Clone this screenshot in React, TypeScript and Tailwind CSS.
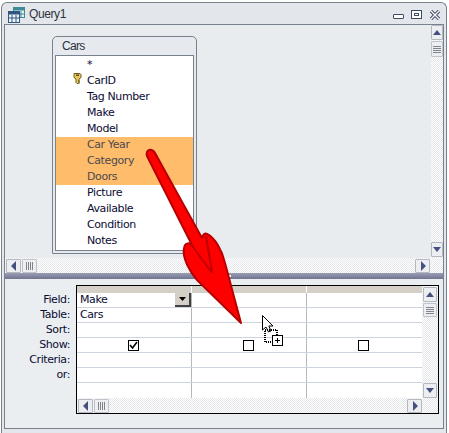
import React from 'react';

const dither = 'bg-[repeating-conic-gradient(#e4e6ea_0_25%,#ffffff_0_50%)] bg-[length:2px_2px]';

const fields = ['*', 'CarID', 'Tag Number', 'Make', 'Model', 'Car Year', 'Category', 'Doors', 'Picture', 'Available', 'Condition', 'Notes'];
const selected = ['Car Year', 'Category', 'Doors'];
const rowLabels = ['Field:', 'Table:', 'Sort:', 'Show:', 'Criteria:', 'or:'];

const Arrow = ({ dir }: { dir: 'up' | 'down' | 'left' | 'right' }) => {
  const points = {
    up: '1,7 9,7 5,2',
    down: '1,2 9,2 5,7',
    left: '7,0 7,10 2,5',
    right: '3,0 3,10 8,5',
  }[dir];
  return (
    <svg width="10" height="10" viewBox="0 0 10 10">
      <polygon points={points} fill="#46507c" />
    </svg>
  );
};

const ScrollBtn = ({ dir, className }: { dir: 'up' | 'down' | 'left' | 'right'; className: string }) => (
  <div className={`flex shrink-0 items-center justify-center rounded-[1px] border border-[#b4b8bf] bg-[#eceef1] ${className}`}>
    <Arrow dir={dir} />
  </div>
);

const VThumb = ({ className }: { className: string }) => (
  <div className={`flex shrink-0 flex-col items-center justify-center gap-[1px] rounded-[1px] border border-[#c0c4ca] bg-[#eceef1] ${className}`}>
    <div className="h-px w-[8px] bg-[#80848c]" />
    <div className="h-px w-[8px] bg-[#80848c]" />
    <div className="h-px w-[8px] bg-[#80848c]" />
    <div className="h-px w-[8px] bg-[#80848c]" />
  </div>
);

const HThumb = ({ className }: { className: string }) => (
  <div className={`flex shrink-0 flex-row items-center justify-center gap-[1px] rounded-[1px] border border-[#c0c4ca] bg-[#eceef1] ${className}`}>
    <div className="h-[8px] w-px bg-[#80848c]" />
    <div className="h-[8px] w-px bg-[#80848c]" />
    <div className="h-[8px] w-px bg-[#80848c]" />
    <div className="h-[8px] w-px bg-[#80848c]" />
  </div>
);

const Checkbox = ({ checked }: { checked?: boolean }) => (
  <div className="mr-[2px] flex h-[11px] w-[11px] items-center justify-center border border-black bg-white">
    {checked && (
      <svg width="9" height="9" viewBox="0 0 9 9">
        <path d="M1 4 L3.5 7 L8 1" fill="none" stroke="#000" strokeWidth="1.6" />
      </svg>
    )}
  </div>
);

const QueryIcon = () => (
  <svg width="17" height="16" viewBox="0 0 17 16">
    <rect x="5.5" y="0.5" width="11" height="10" fill="#e8f2f4" stroke="#3f8a96" />
    <rect x="5.5" y="0.5" width="11" height="3" fill="#3f8a96" />
    <path d="M9 4v6M13 4v6M6 7h10" stroke="#3f8a96" />
    <rect x="0.5" y="4.5" width="11" height="11" fill="#eef3f9" stroke="#2f5580" />
    <rect x="0.5" y="4.5" width="11" height="3" fill="#2f5580" />
    <path d="M4 8v7M8 8v7M1 11h10" stroke="#2f5580" />
  </svg>
);

const KeyIcon = () => (
  <svg width="9" height="14" viewBox="0 0 9 14">
    <path d="M1 1.5h6l1 1v3l-2 1.5v3.5l-1 1h-1l-1-1v-3.5l-2-1.5v-3z" fill="#e8c85a" stroke="#6f5a18" />
    <rect x="3" y="2.5" width="3" height="1.5" fill="#5a4a14" />
    <path d="M5 9h2M5 11h2" stroke="#6f5a18" />
  </svg>
);

export default function App() {
  return (
    <div className="relative h-[433px] w-[449px] overflow-hidden bg-white pl-[1px] pr-[2px] pt-[2px] font-['DejaVu_Sans',sans-serif] text-[11px] tracking-[-0.4px] text-[#0b0b33]">
      <div className="flex h-full flex-col rounded-t-[6px] border border-b-0 border-[#78828c] bg-[#e3e6ea] px-[2px] pb-[4px]">
        {/* title bar */}
        <div className="flex h-[21px] shrink-0 items-center">
          <div className="ml-[4px] mt-[3px]"><QueryIcon /></div>
          <span className="ml-[4px] mt-[1px] font-['Liberation_Sans',sans-serif] text-[12px] tracking-[-0.4px] text-[#2c3440]">Query1</span>
          <div className="ml-auto mr-[3px] flex items-center gap-[7px] pt-[2px]">
            <div className="mt-[4px] h-[5px] w-[11px] rounded-[1px] border border-[#3d4a66] bg-white" />
            <div className="flex h-[9px] w-[11px] items-center justify-center border border-[#3d4a66] bg-white">
              <div className="h-[3px] w-[5px] border border-[#3d4a66]" />
            </div>
            <svg width="12" height="10" viewBox="0 0 12 10">
              <path d="M2 1 L10 9 M10 1 L2 9" stroke="#3d4a66" strokeWidth="3.2" />
              <path d="M2 1 L10 9 M10 1 L2 9" stroke="#ffffff" strokeWidth="1.2" />
            </svg>
          </div>
        </div>

        {/* query window */}
        <div className="flex min-h-0 flex-1 flex-col border border-[#78828c] bg-[#e9ecef]">
          {/* design surface */}
          <div className="flex h-[248px] shrink-0 flex-col">
            <div className="flex min-h-0 flex-1">
              <div className="flex-1 pl-[47px] pt-[11px]">
                <div className="flex h-[218px] w-[145px] flex-col rounded-t-[5px] border border-[#78828c] bg-[#e6e9ed] px-[2px] pb-[2px]">
                  <div className="flex h-[18px] shrink-0 items-center pl-[7px] font-['Liberation_Sans',sans-serif] text-[12px] tracking-[-0.7px] text-[#2c3440]">Cars</div>
                  <div className="relative flex-1 border border-[#78828c] bg-white pt-[1px]">
                    {fields.map((f) => (
                      <div
                        key={f}
                        className={`flex h-[16px] items-center pl-[31px] ${selected.includes(f) ? 'bg-[#ffbc6b] text-[#4a4a50]' : ''}`}
                      >
                        {f}
                      </div>
                    ))}
                    <div className="absolute left-[17px] top-[16px]"><KeyIcon /></div>
                  </div>
                </div>
              </div>
              <div className={`flex w-[12px] shrink-0 flex-col ${dither}`}>
                <ScrollBtn dir="up" className="h-[15px]" />
                <VThumb className="mt-px h-[16px]" />
                <div className="flex-1" />
                <ScrollBtn dir="down" className="mb-px h-[15px]" />
              </div>
            </div>
            <div className={`flex h-[15px] shrink-0 items-center pl-[1px] pr-[13px] ${dither}`}>
              <ScrollBtn dir="left" className="h-[14px] w-[15px]" />
              <HThumb className="ml-px h-[14px] w-[15px]" />
              <div className="flex-1" />
              <ScrollBtn dir="right" className="h-[14px] w-[15px]" />
            </div>
          </div>

          {/* splitter */}
          <div className="relative flex h-[6px] shrink-0 items-center justify-center bg-gradient-to-b from-[#9a9db4] to-[#70748f]">
            <div className="ml-[4px] flex gap-[2px]">
              <div className="h-[2px] w-[2px] bg-white" />
              <div className="h-[2px] w-[2px] bg-white" />
              <div className="h-[2px] w-[2px] bg-white" />
            </div>
          </div>

          {/* design grid */}
          <div className="flex min-h-0 flex-1 bg-[#ebeef1]">
            <div className="w-[71px] shrink-0 pr-[6px] pt-[14px] text-right">
              {rowLabels.map((l) => (
                <div key={l} className="flex h-[15px] items-center justify-end">{l}</div>
              ))}
            </div>
            <div className="mt-[6px] flex h-[129px] w-[363px] shrink-0 border border-black bg-white">
              <div className="flex w-[345px] shrink-0 flex-col">
                <div className="flex h-[7px] shrink-0">
                  <div className="w-[115px] border-r border-[#ffffff] bg-[#d4d0c8]" />
                  <div className="w-[115px] border-r border-[#ffffff] bg-[#d4d0c8]" />
                  <div className="w-[115px] bg-[#d4d0c8]" />
                </div>
                {[0, 1, 2, 3, 4, 5, 6].map((r) => (
                  <div key={r} className={`flex h-[15px] shrink-0 ${r < 6 ? 'border-b border-[#cdd4e0]' : ''}`}>
                    {[0, 1, 2].map((c) => (
                      <div
                        key={c}
                        className={`flex w-[115px] items-center justify-center ${c < 2 ? 'border-r border-[#b4b8bc]' : ''}`}
                      >
                        {r === 0 && c === 0 && (
                          <div className="flex w-full items-center pl-[3px]">
                            <span className="pt-[1px]">Make</span>
                            <div className="ml-auto flex h-[14px] w-[16px] items-center justify-center border-b-2 border-r-2 border-b-[#404040] border-r-[#404040] bg-[#d4d0c8]">
                              <svg width="7" height="4" viewBox="0 0 7 4"><polygon points="0,0 7,0 3.5,4" fill="#000" /></svg>
                            </div>
                          </div>
                        )}
                        {r === 1 && c === 0 && <span className="w-full pl-[3px] pt-[1px]">Cars</span>}
                        {r === 3 && <Checkbox checked={c === 0} />}
                      </div>
                    ))}
                  </div>
                ))}
                <div className={`flex h-[15px] shrink-0 items-center pl-[1px] ${dither}`}>
                  <ScrollBtn dir="left" className="h-[14px] w-[15px]" />
                  <HThumb className="ml-px h-[14px] w-[15px]" />
                  <div className="flex-1" />
                  <ScrollBtn dir="right" className="h-[14px] w-[15px]" />
                </div>
              </div>
              <div className={`flex flex-1 flex-col px-[1px] pb-[15px] pt-[1px] ${dither}`}>
                <ScrollBtn dir="up" className="h-[15px]" />
                <VThumb className="mt-px h-[14px]" />
                <div className="flex-1" />
                <ScrollBtn dir="down" className="h-[15px]" />
              </div>
            </div>
          </div>
        </div>
      </div>

      {/* annotation arrow drawn over the window */}
      <svg className="absolute left-0 top-0" width="449" height="433" viewBox="0 0 449 433">
        <path
          d="M147 156 C145 149 152 148 155 153 L202 238 C203 234 205 233 207 234 C215 238 222 250 225 263 L241 323 L197 280 C190 272 182 258 184 248 C185 242 190 242 193 247 L147 156 Z"
          fill="#ff0000"
          stroke="#b80000"
          strokeWidth="2"
          strokeLinejoin="round"
        />
        <path d="M193 247 L212 273 M206 236 L212 272" fill="none" stroke="#c00000" strokeWidth="2" />
      </svg>

      {/* drag cursor */}
      <svg className="absolute left-[262px] top-[315px]" width="22" height="31" viewBox="0 0 22 31">
        <path d="M0.5 0.5 V15 L4 12 L6.5 17 L9 16 L6.8 11 H11 Z" fill="#fff" stroke="#000" />
        <rect x="3" y="15" width="12" height="12" fill="none" stroke="#000" strokeWidth="2" strokeDasharray="1 1" />
        <rect x="10.5" y="20.5" width="10" height="10" fill="#fff" stroke="#000" />
        <path d="M13 25.5h5M15.5 23v5" stroke="#000" />
      </svg>
    </div>
  );
}
